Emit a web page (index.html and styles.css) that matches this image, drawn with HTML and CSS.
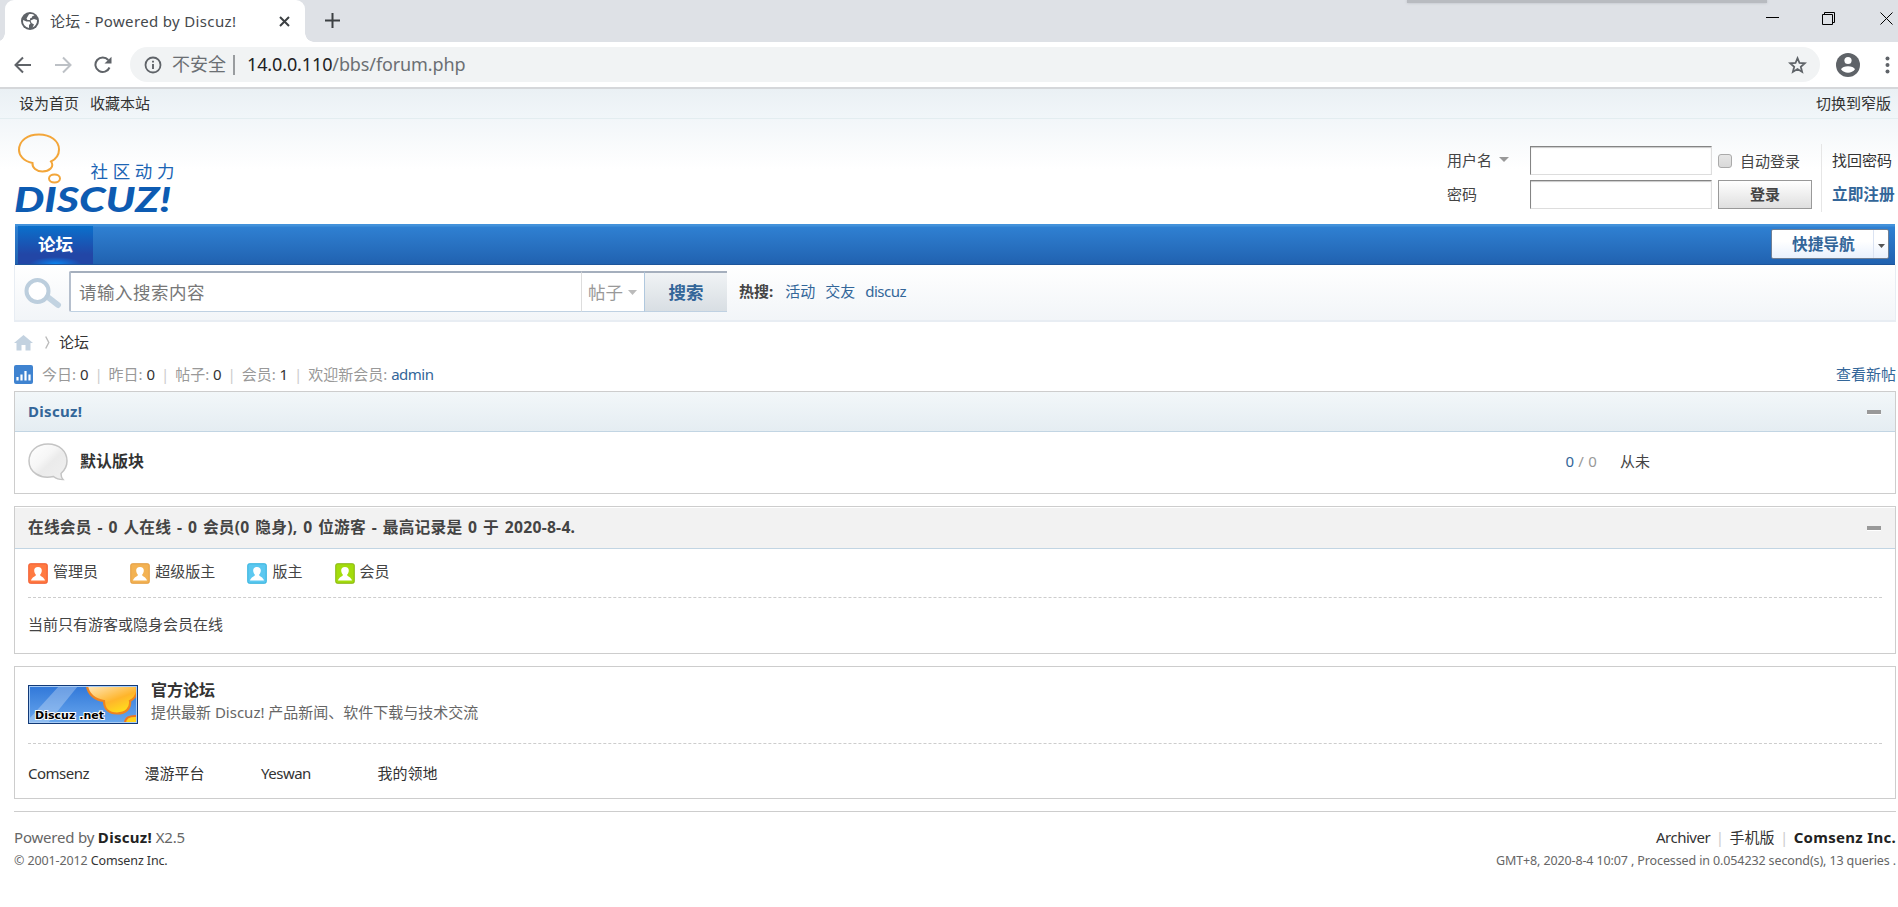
FILE: index.html
```html
<!DOCTYPE html>
<html lang="zh-CN">
<head>
  <meta charset="UTF-8" />
  <title>论坛 - Powered by Discuz!</title>
  <link rel="stylesheet" href="styles.css">
</head>
<body>
  <!-- browser window -->
  <div class="tabstrip">
    <div class="tab">
      <svg class="favicon" width="18" height="18" viewBox="0 0 18 18"><circle cx="9" cy="9" r="9" fill="#5f6368"/><path d="M2 8L5.500 9.500H8.500L9.500 11.500L8 13V16A7.200 7.200 0 0 1 2 8ZM8 2.300C10 1.600 12 2 13.500 3.200L11 4.500V5.500L9 6.500V8H6.500L5.500 6.500ZM9.500 8.500L13 7L16 8C16.200 11.500 14.500 14 11.500 15.500L13 12.500L10.500 11Z" fill="#fff"/></svg>
      <span class="tab-title">论坛 - Powered by Discuz!</span>
      <svg class="tab-close" width="11" height="11" viewBox="0 0 11 11"><path d="M1 1L10 10M10 1L1 10" stroke="#3c4043" stroke-width="2"/></svg>
    </div>
    <svg class="tab-new" width="15" height="15" viewBox="0 0 15 15"><path d="M7.500 0V15M0 7.500H15" stroke="#3c4043" stroke-width="2"/></svg>
    <div class="window-shade"></div>
    <svg class="win-min" width="13" height="13" viewBox="0 0 13 13"><path d="M0 5.500H13" stroke="#000"/></svg>
    <svg class="win-max" width="13" height="13" viewBox="0 0 13 13"><path d="M.5 2.500H10.500V12.500H.5ZM2.500 2.500V.5H12.500V10.500H10.500" fill="none" stroke="#000"/></svg>
    <svg class="win-close" width="13" height="13" viewBox="0 0 13 13"><path d="M.5 .5L12.500 12.500M12.500 .5L.5 12.500" stroke="#000"/></svg>
  </div>

  <div class="addressbar">
    <svg class="nav-icon" width="18" height="18" viewBox="0 0 18 18"><path d="M17 9H2M9 1.500L1.500 9L9 16.500" fill="none" stroke="#5f6368" stroke-width="2"/></svg>
    <svg class="nav-icon" width="18" height="18" viewBox="0 0 18 18"><path d="M1 9H16M9 1.500L16.500 9L9 16.500" fill="none" stroke="#bdc1c6" stroke-width="2"/></svg>
    <svg class="nav-icon" width="18" height="18" viewBox="0 0 18 18"><path d="M15.500 11.500A7.300 7.300 0 1 1 14.300 4" fill="none" stroke="#5f6368" stroke-width="2"/><path d="M17.500 .8V7.500H10.500Z" fill="#5f6368"/></svg>
    <div class="omnibox">
      <svg width="18" height="18" viewBox="0 0 18 18"><circle cx="9" cy="9" r="7.500" fill="none" stroke="#5f6368" stroke-width="1.800"/><path d="M9 8V13M9 4.800V6.600" stroke="#5f6368" stroke-width="1.900"/></svg>
      <span class="insecure">不安全</span>
      <span class="omnibox-sep"></span>
      <span class="url"><b>14.0.0.110</b>/bbs/forum.php</span>
      <svg class="star" width="19" height="18" viewBox="0 0 19 18"><path d="M9.500 2.200L11.500 7L16.800 7.300L12.800 10.700L14.100 15.900L9.500 13.100L4.900 15.900L6.200 10.700L2.200 7.300L7.500 7Z" fill="none" stroke="#5f6368" stroke-width="1.800"/></svg>
    </div>
    <svg class="avatar" width="24" height="24" viewBox="0 0 24 24"><circle cx="12" cy="12" r="12" fill="#5f6368"/><circle cx="12" cy="7.500" r="3.600" fill="#fff"/><path d="M5 16.200C6.500 12.200 17.500 12.200 19 16.200C16 20.800 8 20.800 5 16.200Z" fill="#fff"/></svg>
    <svg class="menu-dots" width="5" height="18" viewBox="0 0 5 18"><g fill="#5f6368"><circle cx="2.500" cy="2.500" r="2"/><circle cx="2.500" cy="9" r="2"/><circle cx="2.500" cy="15.500" r="2"/></g></svg>
  </div>

  <!-- forum page -->
  <div class="toptb">
    <a href="#">设为首页</a>
    <a href="#">收藏本站</a>
    <a class="switch" href="#">切换到窄版</a>
  </div>

  <header class="hd">
    <svg class="logo" width="164" height="92" viewBox="0 0 164 92">
      <g fill="none" stroke="#f3a63a" stroke-width="2">
        <path d="M17.500 31C8 29 4 23 4 18C4 8.500 12.500 2.500 24 2.500C35.500 2.500 44 9 44 17.500C44 23.500 41 27 36 29.500C40 35 34 39.500 27.500 39.500C21.500 39.500 17 35.500 17.500 31Z"/>
        <ellipse cx="39.500" cy="46.500" rx="5.500" ry="4"/>
      </g>
      <text class="logo-cn" x="75.500" y="46" textLength="84">社区动力</text>
      <text class="logo-en" x="-1" y="80" textLength="157" lengthAdjust="spacingAndGlyphs">DISCUZ!</text>
    </svg>
    <form class="login">
      <div class="login-grid">
        <label>用户名 <svg class="caret" width="10" height="5" viewBox="0 0 10 5"><path d="M0 0H10L5 5Z" fill="#999"/></svg></label>
        <input class="px" type="text">
        <span class="auto"><i class="checkbox"></i>自动登录</span>
        <label>密码</label>
        <input class="px" type="password">
        <button class="pn" type="button">登录</button>
      </div>
      <div class="login-links">
        <a href="#">找回密码</a>
        <a class="register" href="#">立即注册</a>
      </div>
    </form>
  </header>

  <nav class="nv">
    <a class="active" href="#">论坛</a>
    <div class="qmenu">
      <span class="qmenu-text">快捷导航</span>
      <span class="qmenu-arrow"><svg width="7" height="4" viewBox="0 0 7 4"><path d="M0 0H7L3.500 4Z" fill="#555"/></svg></span>
    </div>
  </nav>

  <div class="scbar">
    <svg class="scbar-icon" width="38" height="31" viewBox="0 0 38 31"><path d="M25 20L34 27" stroke="#c2d3e1" stroke-width="6" stroke-linecap="round"/><circle cx="13.500" cy="13" r="11" fill="#fff" stroke="#bccedd" stroke-width="4"/></svg>
    <div class="scbar-txt">请输入搜索内容</div>
    <div class="scbar-type">帖子<svg width="9" height="5" viewBox="0 0 9 5"><path d="M0 0H9L4.500 5Z" fill="#bbb"/></svg></div>
    <div class="scbar-btn">搜索</div>
    <div class="scbar-hot"><strong>热搜:</strong><a href="#">活动</a><a href="#">交友</a><a class="en" href="#">discuz</a></div>
  </div>

  <div class="pt">
    <svg width="19" height="16" viewBox="0 0 19 16"><path d="M9.500 0L19 8H16.500V15.500H11.500V10H7.500V15.500H2.500V8H0Z" fill="#c3d2e0"/></svg>
    <svg class="pt-arrow" width="5" height="13" viewBox="0 0 5 13"><path d="M.7 .5L3.800 6.500L.7 12.500" fill="none" stroke="#bbb" stroke-width="1.400"/></svg>
    <span>论坛</span>
  </div>

  <div class="chart">
    <svg width="19" height="19" viewBox="0 0 19 19"><rect width="19" height="19" rx="2" fill="#3f83d0"/><path d="M3.500 12V15.500M7.500 9.500V15.500M11.500 6V15.500M15.500 9.500V15.500" stroke="#fff" stroke-width="2.200"/></svg>
    <span class="stats">今日: <em>0</em><i>|</i>昨日: <em>0</em><i>|</i>帖子: <em>0</em><i>|</i>会员: <em>1</em><i>|</i>欢迎新会员: <a class="en" href="#">admin</a></span>
    <a class="newpost" href="#">查看新帖</a>
  </div>

  <section class="bm">
    <div class="bm-h blue"><h2>Discuz!</h2><span class="toggle"></span></div>
    <div class="forum">
      <svg width="40" height="38" viewBox="0 0 40 38">
        <defs><linearGradient id="bubble" x1="0" y1="0" x2="1" y2="1"><stop offset="0" stop-color="#fff"/><stop offset=".4" stop-color="#f6f6f6"/><stop offset=".55" stop-color="#ebebeb"/><stop offset="1" stop-color="#f0f0f0"/></linearGradient></defs>
        <path d="M20 1C31 1 39 8 39 18C39 23.500 36.500 27.500 33 30.500C33 33 33.500 35 35 36.500C30.500 36.500 28 35.500 25.500 33.500C12 36.500 1 29 1 18C1 8 9 1 20 1Z" fill="url(#bubble)" stroke="#c4c4c4" stroke-width="1.500"/>
      </svg>
      <h2>默认版块</h2>
      <span class="count"><b>0</b> / 0</span>
      <span class="last">从未</span>
    </div>
  </section>

  <section class="bm">
    <div class="bm-h grey"><h3>在线会员 - 0 人在线 - 0 会员(0 隐身), 0 位游客 - 最高记录是 0 于 2020-8-4.</h3><span class="toggle"></span></div>
    <div class="online">
      <div class="legend">
        <span class="role admin"><svg width="20" height="21" viewBox="0 0 20 21"><rect class="card" x=".75" y=".75" width="18.500" height="19.500" rx="1.500"/><path class="person" d="M10 4C12.600 4 14 5.500 13.800 8C13.600 10 12.500 11 12 12C12.500 13.500 16 14 17 17.500H3C4 14 7.500 13.500 8 12C7.500 11 6.400 10 6.200 8C6 5.500 7.400 4 10 4Z"/></svg>管理员</span>
        <span class="role super"><svg width="20" height="21" viewBox="0 0 20 21"><rect class="card" x=".75" y=".75" width="18.500" height="19.500" rx="1.500"/><path class="person" d="M10 4C12.600 4 14 5.500 13.800 8C13.600 10 12.500 11 12 12C12.500 13.500 16 14 17 17.500H3C4 14 7.500 13.500 8 12C7.500 11 6.400 10 6.200 8C6 5.500 7.400 4 10 4Z"/></svg>超级版主</span>
        <span class="role mod"><svg width="20" height="21" viewBox="0 0 20 21"><rect class="card" x=".75" y=".75" width="18.500" height="19.500" rx="1.500"/><path class="person" d="M10 4C12.600 4 14 5.500 13.800 8C13.600 10 12.500 11 12 12C12.500 13.500 16 14 17 17.500H3C4 14 7.500 13.500 8 12C7.500 11 6.400 10 6.200 8C6 5.500 7.400 4 10 4Z"/></svg>版主</span>
        <span class="role member"><svg width="20" height="21" viewBox="0 0 20 21"><rect class="card" x=".75" y=".75" width="18.500" height="19.500" rx="1.500"/><path class="person" d="M10 4C12.600 4 14 5.500 13.800 8C13.600 10 12.500 11 12 12C12.500 13.500 16 14 17 17.500H3C4 14 7.500 13.500 8 12C7.500 11 6.400 10 6.200 8C6 5.500 7.400 4 10 4Z"/></svg>会员</span>
      </div>
      <p>当前只有游客或隐身会员在线</p>
    </div>
  </section>

  <section class="bm links">
    <div class="official">
      <svg width="110" height="39" viewBox="0 0 110 39">
        <defs>
          <linearGradient id="sky" x1="0" y1="0" x2="0" y2="1"><stop offset="0" stop-color="#2f76d8"/><stop offset="1" stop-color="#6ba9ee"/></linearGradient>
          <linearGradient id="sun" x1="0" y1="0" x2=".7" y2="1"><stop offset="0" stop-color="#ffe9c0"/><stop offset=".6" stop-color="#ffb52b"/><stop offset="1" stop-color="#ffe21a"/></linearGradient>
        </defs>
        <rect width="110" height="39" fill="url(#sky)"/>
        <path d="M31 1H50L20 38H1V34Z" fill="#fff" opacity=".28"/>
        <path d="M59 1C60 9 67 15 76 16C76 24 81 28.500 89 28.500C98 28.500 103 23 102 16C106 14 108 11 109 7V1Z" fill="url(#sun)" stroke="#ef8420" stroke-width="2.200"/>
        <path d="M97 38C97 33 101 30.500 109 31V38Z" fill="#ffd21a" stroke="#ef7420" stroke-width="2"/>
        <rect x="1.500" y="1.500" width="107" height="36" fill="none" stroke="#a8ccf5"/>
        <rect x=".5" y=".5" width="109" height="38" fill="none" stroke="#123a78"/>
        <text class="net" x="7" y="34" textLength="69" lengthAdjust="spacingAndGlyphs">Discuz .net</text>
      </svg>
      <div class="official-text">
        <h5>官方论坛</h5>
        <p>提供最新 Discuz! 产品新闻、软件下载与技术交流</p>
      </div>
    </div>
    <ul>
      <li class="en">Comsenz</li>
      <li>漫游平台</li>
      <li class="en">Yeswan</li>
      <li>我的领地</li>
    </ul>
  </section>

  <footer class="ft">
    <div>
      <p class="powered">Powered by <strong>Discuz!</strong> X2.5</p>
      <p class="xs">© 2001-2012 <a href="#">Comsenz Inc.</a></p>
    </div>
    <div class="ft-right">
      <p><a class="en" href="#">Archiver</a><i>|</i><a href="#">手机版</a><i>|</i><strong>Comsenz Inc.</strong></p>
      <p class="xs">GMT+8, 2020-8-4 10:07 , Processed in 0.054232 second(s), 13 queries .</p>
    </div>
  </footer>
</body>
</html>
```
FILE: styles.css
```css
* {
  box-sizing: border-box;
}

body {
  margin: 0;
  height: 907px;
  overflow: hidden;
  background: #fff;
  color: #444;
  font: 15px/20px "Noto Sans", "Noto Sans CJK SC", sans-serif;
  white-space: nowrap;
}

h2, h3, h5, p, ul {
  margin: 0;
  padding: 0;
  font-size: 15px;
}

a {
  color: #333;
  text-decoration: none;
}

svg {
  display: block;
  flex: none;
}

i, em {
  font-style: normal;
}

.en {
  letter-spacing: -.5px;
}

/* browser window */
.tabstrip {
  display: flex;
  height: 42px;
  padding-left: 5px;
  background: #dee1e6;
}

.tab {
  display: flex;
  position: relative;
  width: 300px;
  height: 42px;
  padding: 12px 15px 0 16px;
  background: #fff;
  border-radius: 9px 9px 0 0;
}

.tab::before,
.tab::after {
  content: "";
  position: absolute;
  bottom: 0;
  width: 9px;
  height: 9px;
}

.tab::before {
  left: -9px;
  background: radial-gradient(circle at 0 0, transparent 8.5px, #fff 9px);
}

.tab::after {
  right: -9px;
  background: radial-gradient(circle at 100% 0, transparent 8.5px, #fff 9px);
}

.tab-title {
  margin: -1px 0 0 11px;
  color: #45494d;
  letter-spacing: .35px;
}

.tab-close {
  margin: 4px 0 0 auto;
}

.tab-new {
  margin: 13px 0 0 20px;
}

.window-shade {
  width: 360px;
  height: 3px;
  margin: 0 1px 0 1067px;
  background: #b8bbc0;
  box-shadow: 0 0 3px #b8bbc0;
}

.win-min {
  margin: 12px 0 0 -2px;
}

.win-max {
  margin: 12px 0 0 43px;
}

.win-close {
  margin: 12px 0 0 45px;
}

.addressbar {
  display: flex;
  align-items: center;
  height: 47px;
  padding-left: 14px;
  border-bottom: 2px solid #d5d7da;
}

.nav-icon {
  margin-right: 22px;
}

.omnibox {
  display: flex;
  align-items: center;
  width: 1690px;
  height: 35px;
  margin-left: -4px;
  padding: 0 13px 0 14px;
  border-radius: 18px;
  background: #f1f3f4;
  color: #6b6f73;
  font-size: 18px;
}

.insecure {
  margin: -1px 0 0 10px;
}

.omnibox-sep {
  width: 2px;
  height: 20px;
  margin: 0 12px 0 7px;
  background: #999c9f;
}

.url {
  margin-top: -2px;
  letter-spacing: -.12px;
}

.url b {
  color: #202124;
  font-weight: 400;
}

.star {
  margin-left: auto;
}

.avatar {
  margin-left: 16px;
}

.menu-dots {
  margin-left: 25px;
}

/* top bar and header */
.toptb {
  display: flex;
  gap: 11px;
  height: 30px;
  padding: 4px 7px 0 19px;
  border-bottom: 1px solid #e3edf0;
  background: linear-gradient(#eaf0f4, #f1f6f9);
}

.switch {
  margin-left: auto;
}

.hd {
  display: flex;
  justify-content: space-between;
  height: 105px;
  padding: 13px 2px 0 15px;
  background: linear-gradient(#f2f6f9, #fff 50px);
}

.logo {
  overflow: visible;
}

.logo-cn {
  font: 400 17.5px "Noto Sans CJK SC", sans-serif;
  fill: #1c64b4;
}

.logo-en {
  font: italic 900 35px Lato, sans-serif;
  fill: #0d5bb2;
}

.login {
  display: flex;
  padding-top: 14px;
}

.login-grid {
  display: grid;
  grid-template-columns: 83px 182px 94px;
  grid-template-rows: 29px 29px;
  gap: 5px 0;
  align-items: center;
}

.login-grid label {
  display: flex;
  align-items: center;
  margin-top: -2px;
}

.caret {
  margin-left: 7px;
}

.px {
  width: 182px;
  height: 29px;
  border: 1px solid;
  border-color: #848484 #ddd #ddd #848484;
  background: #fff;
  box-shadow: inset 0 1px 1px #c9c9c9;
}

.auto,
.pn {
  margin-left: 6px;
}

.auto {
  display: flex;
  align-items: center;
  gap: 8px;
}

.checkbox {
  width: 14px;
  height: 14px;
  border: 1px solid #aaa;
  border-radius: 3px;
  background: linear-gradient(#e6e6e6, #d9d9d9);
}

.pn {
  width: 94px;
  height: 29px;
  padding: 0 0 2px;
  border: 1px solid #999;
  background: linear-gradient(#fff, #dfdfdf);
  color: #444;
  font: bold 15px/20px "Noto Sans CJK SC", sans-serif;
}

.login-links {
  display: flex;
  flex-direction: column;
  gap: 14px;
  width: 75px;
  height: 68px;
  margin: -2px 0 0 15px;
  padding: 6px 0 0 10px;
  border-left: 1px solid #e6e6e6;
}

.register {
  color: #369;
  font-size: 15.7px;
  font-weight: 700;
}

/* main nav */
.nv {
  display: flex;
  justify-content: space-between;
  height: 41px;
  margin: 0 3px 0 15px;
  padding: 0 6px 0 3px;
  border-bottom: 1px solid #1d559b;
  background: linear-gradient(#4392db 2px, #2f80d2 3px, #2162b0);
}

.nv .active {
  width: 75px;
  height: 38px;
  margin-top: 2px;
  background: radial-gradient(ellipse 26px 7px at 50% 100%, #0a84ef, transparent), linear-gradient(#0a70cc, #2246a6 75%);
  color: #fff;
  font-size: 17.5px;
  font-weight: 700;
  line-height: 36px;
  text-align: center;
}

.qmenu {
  display: flex;
  width: 118px;
  height: 30px;
  margin-top: 5px;
  border: 1px solid #6f7f94;
  border-radius: 2px;
  background: linear-gradient(#fff 40%, #e9f1fd);
  color: #369;
  font-size: 15.7px;
  font-weight: 700;
  line-height: 28px;
}

.qmenu-text {
  width: 102px;
  padding-left: 20px;
  border-right: 1px solid #dbe3f2;
}

.qmenu-arrow {
  padding: 14px 0 0 4px;
}

/* search bar */
.scbar {
  display: flex;
  height: 57px;
  margin: 0 2px 0 14px;
  padding: 6px 0 0 9px;
  border: solid #e8edf3;
  border-width: 0 1px 2px;
  background: linear-gradient(#fff, #f2f5f8);
}

.scbar-icon {
  margin: 7px 7px 0 0;
}

.scbar-txt,
.scbar-type,
.scbar-btn {
  height: 41px;
  border-top: 2px solid #a5afbd;
  border-bottom: 1px solid #bfd1e2;
  font-size: 17.5px;
  line-height: 39px;
}

.scbar-txt {
  width: 512px;
  padding-left: 8px;
  border-left: 2px solid #b5bfcd;
  border-radius: 2px 0 0 2px;
  background: #fff;
  color: #777;
  letter-spacing: .5px;
}

.scbar-type {
  display: flex;
  align-items: center;
  gap: 5px;
  width: 63px;
  padding-left: 6px;
  border-left: 1px solid #ddd;
  background: #fff;
  color: #999;
}

.scbar-btn {
  width: 83px;
  border-left: 1px solid #b0c8de;
  background: linear-gradient(#f0f3f5, #d8dee3);
  color: #369;
  font-weight: 700;
  text-align: center;
}

.scbar-hot {
  display: flex;
  gap: 10px;
  padding: 10px 0 0 12px;
}

.scbar-hot strong {
  margin-right: 2px;
}

.scbar-hot a {
  color: #369;
}

/* breadcrumb and counters */
.pt {
  display: flex;
  align-items: center;
  height: 41px;
  padding-left: 14px;
  color: #333;
}

.pt-arrow {
  margin: 0 9px 0 12px;
}

.pt span {
  margin-top: -2px;
}

.chart {
  display: flex;
  align-items: center;
  height: 28px;
  padding: 0 2px 5px 14px;
}

.stats {
  margin: -2px 0 0 9px;
  color: #999;
}

.stats em {
  color: #333;
}

.stats i {
  margin: 0 5.9px;
  color: #ccc;
}

.stats a {
  color: #369;
}

.newpost {
  margin: -2px 0 0 auto;
  color: #369;
}

/* boxes */
.bm {
  margin: 0 2px 12px 14px;
  border: 1px solid #cdcdcd;
}

.bm-h {
  display: flex;
  align-items: center;
  justify-content: space-between;
  height: 40px;
  padding: 0 14px 0 13px;
  border-bottom: 1px solid #c2d5e3;
}

.bm-h h2,
.bm-h h3 {
  margin-top: -2px;
}

.bm-h.blue {
  background: linear-gradient(#f2f7f9, #e5edf2);
}

.bm-h.blue h2 {
  color: #369;
  letter-spacing: .3px;
}

.bm-h.grey {
  height: 42px;
  border-top: 1px solid #fff;
  background: #f2f2f2;
}

.bm-h.grey h3 {
  font-size: 15.7px;
  letter-spacing: .25px;
  word-spacing: 1.4px;
}

.toggle {
  width: 14px;
  height: 4px;
  background: #999;
  box-shadow: 0 1px #fff;
}

.forum {
  display: flex;
  align-items: center;
  height: 61px;
  padding: 0 0 1px 13px;
}

.forum h2 {
  margin: -2px 0 0 12px;
  color: #333;
  font-size: 16px;
}

.count {
  margin: -2px 0 0 auto;
  color: #999;
  letter-spacing: .2px;
}

.count b {
  color: #369;
  font-weight: 400;
}

.last {
  width: 275px;
  margin: -2px 0 0 23px;
}

.online {
  height: 104px;
  padding: 0 13px;
}

.legend {
  display: flex;
  height: 49px;
  padding-top: 14px;
  border-bottom: 1px dashed #cdcdcd;
}

.role {
  display: flex;
  gap: 5px;
  line-height: 17px;
}

.role + .role {
  margin-left: 32.2px;
}

.person {
  fill: #fff;
}

.admin .card {
  fill: #ff7a42;
  stroke: #f0562a;
}

.super .card {
  fill: #f3b253;
  stroke: #e29a3c;
}

.mod .card {
  fill: #5cc8f0;
  stroke: #2fb0dc;
}

.member .card {
  fill: #a3dc0c;
  stroke: #86b30e;
}

.online p {
  padding-top: 16px;
}

.links {
  height: 133px;
  padding: 0 13px;
}

.official {
  display: flex;
  height: 77px;
  padding-top: 18px;
  border-bottom: 1px dashed #cdcdcd;
}

.net {
  font: bold 11px "DejaVu Sans", sans-serif;
  fill: #000;
  stroke: #fff;
  stroke-width: 2px;
  paint-order: stroke;
}

.official-text {
  margin: -6px 0 0 13px;
  color: #666;
  line-height: 22px;
}

.official-text h5 {
  color: #333;
  font-size: 16px;
}

.links ul {
  display: flex;
  padding-top: 19px;
  color: #333;
  list-style: none;
}

.links li {
  width: 116.5px;
}

.ft {
  display: flex;
  justify-content: space-between;
  margin: 0 2px 0 14px;
  padding-top: 13px;
  border-top: 1px solid #cdcdcd;
  color: #666;
  line-height: 24px;
}

.ft i {
  margin: 0 5.5px;
  color: #ccc;
}

.ft strong {
  color: #222;
  letter-spacing: .3px;
}

.powered {
  letter-spacing: -.2px;
}

.ft .xs {
  font-size: 12.5px;
  letter-spacing: -.12px;
}

.ft-right {
  text-align: right;
}
```
